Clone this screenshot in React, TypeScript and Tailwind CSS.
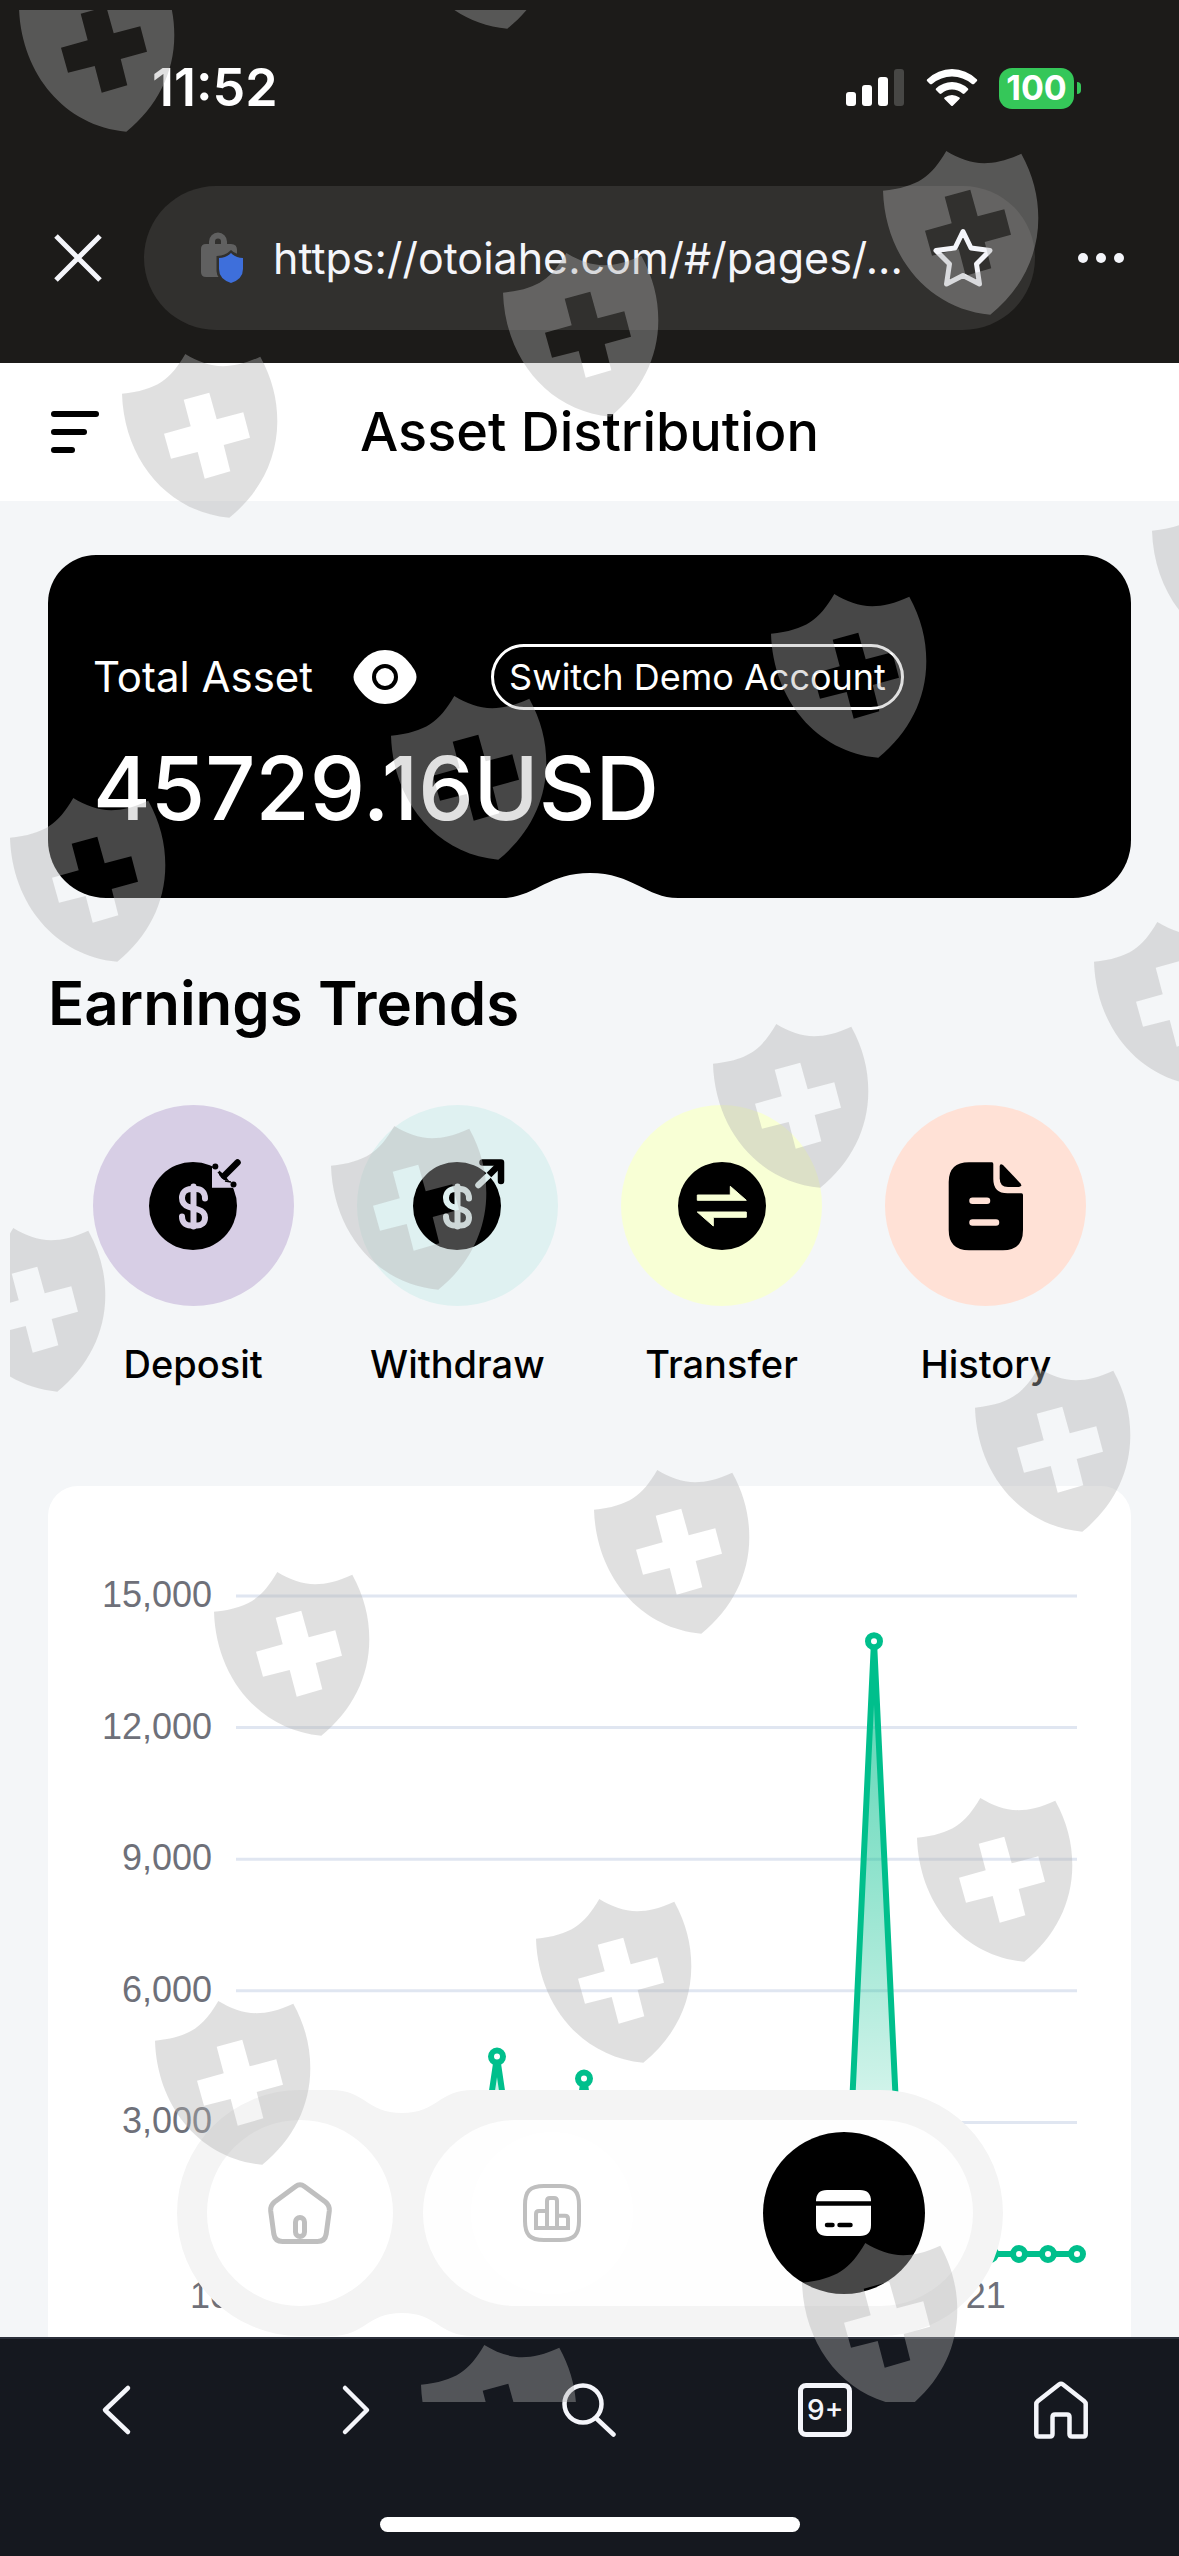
import { useState } from 'react';

interface Action {
    label: string;
    color: string;
    icon: React.ReactNode;
}

const shields = [
    [9, -42], [390, -145], [873, 141], [493, 243], [112, 344],
    [1142, 481], [761, 584], [381, 686], [0, 788],
    [1084, 912], [703, 1014], [321, 1116], [-60, 1218],
    [965, 1358], [584, 1460], [204, 1562],
    [907, 1788], [526, 1889], [145, 1991],
    [792, 2233], [411, 2335],
];

// 30 days of earnings, only three of them are not zero
const earnings = Array.from({ length: 30 }, (_, day) => {
    if (day === 9) return 4500;
    if (day === 12) return 4000;
    if (day === 22) return 13970;
    return 0;
});

const CHART = { left: 188, right: 1029, top: 110, bottom: 768, max: 15000 };

const pointX = (day: number) => CHART.left + ((CHART.right - CHART.left) / (earnings.length - 1)) * day;
const pointY = (value: number) => CHART.bottom - ((CHART.bottom - CHART.top) * value) / CHART.max;

const Dollar = ({ color }: { color: string }) => (
    <g fill="none" stroke={color} strokeWidth="6" strokeLinecap="round">
        <path d="M60 40.5C60 34 56 31 51.5 31H46C40.5 31 37 35 37 40C37 45 39.5 47.5 44 49L53 51.5C57.5 53 60 55 60 59.5C60 65 56.5 67.5 52 67.5H45.5C40 67.5 37 64 37 58.5" />
        <path d="M48.5 28.5V68.5" />
    </g>
);

const actions: Action[] = [
    {
        label: 'Deposit',
        color: 'bg-[#d7cee5]',
        icon: (
            <>
                <circle cx="48" cy="48" r="44" />
                <Dollar color="#d7cee5" />
                <path d="M67 29.7V9.7H74V17L79 22L88 24V29.7Z" fill="#d7cee5" />
                <path d="M92.5 4.5L79 18" stroke="#000" strokeWidth="6.5" strokeLinecap="round" />
                <circle cx="70.3" cy="8.5" r="3" />
                <circle cx="88.5" cy="26.5" r="3" />
                <path d="M73 14L78 19M80 23L86 24" stroke="#000" strokeWidth="1.5" />
            </>
        ),
    },
    {
        label: 'Withdraw',
        color: 'bg-[#dff1f1]',
        icon: (
            <>
                <circle cx="48" cy="48" r="44" />
                <Dollar color="#dff1f1" />
                <path d="M79 18L69.5 27" stroke="#dff1f1" strokeWidth="6.5" strokeLinecap="round" />
                <path d="M73.5 4.5H92V23" fill="none" stroke="#000" strokeWidth="6.5" strokeLinecap="round" strokeLinejoin="round" />
                <path d="M91 6L80 17" stroke="#000" strokeWidth="6.5" />
            </>
        ),
    },
    {
        label: 'Transfer',
        color: 'bg-[#f8ffd5]',
        icon: (
            <>
                <circle cx="48" cy="48" r="44" />
                <path
                    d="M23.3 37H56.3V28.3L72.3 42.3H23.3ZM23.3 54H72.3V59.3H39.3V68Z"
                    fill="#f8ffd5"
                    stroke="#f8ffd5"
                    strokeLinejoin="round"
                />
            </>
        ),
    },
    {
        label: 'History',
        color: 'bg-[#ffe1d6]',
        icon: (
            <>
                <path d="M31 4.3H54Q55.3 4.3 55.3 6V21Q55.3 35.3 69.5 35.3H83.5Q85 35.3 85 37V72Q85 92.3 65 92.3H31Q10.7 92.3 10.7 72V24Q10.7 4.3 31 4.3Z" />
                <path d="M61.7 8Q62 5 65 7L82.5 25.5Q84.5 28.5 81 29H70Q61.7 29 61.7 20.5Z" />
                <path d="M34.5 42.7H49M34.5 64.5H58" stroke="#ffe1d6" strokeWidth="6.5" strokeLinecap="round" />
            </>
        ),
    },
];

const StatusBar = () => (
    <div className="flex h-[172px] items-center justify-between pl-[152px] pr-[98px] pt-1 text-white">
        <span className="text-[52px] font-semibold leading-none">11:52</span>
        <div className="flex items-center">
            <svg width="58" height="38" viewBox="0 0 58 38" fill="#fff" className="mr-[22px]">
                <rect x="0" y="23" width="10" height="14" rx="3" />
                <rect x="16" y="16" width="10" height="21" rx="3" />
                <rect x="32" y="8" width="10" height="29" rx="3" />
                <rect x="48" y="0" width="10" height="37" rx="3" fill="#474745" />
            </svg>
            <svg width="52" height="38" viewBox="0 0 52 38" fill="#fff" className="mr-[21px]">
                <path d="M1 10.5Q12 0 26 0T51 10.5Q51.5 11.3 51 12L48 15Q47 15.7 46 15Q37 7.5 26 7.5T6 15Q5 15.7 4 15L1 12Q.5 11.3 1 10.5Z" />
                <path d="M10 19.5Q17 13 26 13T42 19.5Q42.7 20.3 42 21L38.5 24.5Q37.5 25.3 36.5 24.5Q32 20.5 26 20.5T15.5 24.5Q14.5 25.3 13.5 24.5L10 21Q9.3 20.3 10 19.5Z" />
                <path d="M18.5 28.5Q22 26 26 26T33.5 28.5Q34.3 29.3 33.5 30L27 36.5Q26 37.5 25 36.5L18.5 30Q17.7 29.3 18.5 28.5Z" />
            </svg>
            <span className="flex h-[41px] w-[75px] items-center justify-center rounded-[13px] bg-[#35c759] text-[34px] font-bold leading-none">
                100
            </span>
            <span className="ml-[3px] h-3 w-1 rounded-r-full bg-[#35c759]" />
        </div>
    </div>
);

const AddressBar = () => (
    <div className="flex items-center gap-[42px] px-[54px] pb-[33px] pt-[14px] text-[#f4f5fa]">
        <button type="button" aria-label="Close">
            <svg width="48" height="48" viewBox="0 0 48 48" stroke="currentColor" strokeWidth="5">
                <path d="M2 2L46 46M46 2L2 46" />
            </svg>
        </button>
        <div className="flex h-36 min-w-0 flex-1 items-center rounded-full bg-[#31302e] pl-[56px] pr-[42px]">
            <svg width="44" height="54" viewBox="0 0 44 54" className="mr-[29px] shrink-0">
                <path d="M12 14V10.5a6 6 0 0 1 12 0V14" fill="none" stroke="#606060" strokeWidth="6" />
                <path d="M6 13H31Q37 13 37 19V46H6Q1 46 1 41V18Q1 13 6 13Z" fill="#606060" />
                <path d="M31 19Q25 25 16.5 25V40Q16.5 49 31 55H46V24Q36 24 31 19Z" fill="#31302e" />
                <path d="M31 22Q36 27 43 27V38Q43 48 31 52Q19 48 19 38V27Q26 27 31 22Z" fill="#3e6fdb" />
            </svg>
            <input
                type="text"
                aria-label="Address"
                readOnly
                value="https://otoiahe.com/#/pages/..."
                className="min-w-0 flex-1 bg-transparent text-[43px] outline-none"
            />
            <button type="button" aria-label="Add bookmark">
                <svg width="60" height="60" viewBox="0 0 60 60" fill="none" stroke="currentColor" strokeWidth="5" strokeLinejoin="round">
                    <path d="M30 3.5L38 20L57 22.5L43.5 36L46.5 56L30 47.5L13.5 56L16.5 36L3 22.5L22 20Z" />
                </svg>
            </button>
        </div>
        <button type="button" aria-label="More">
            <svg width="48" height="12" viewBox="0 0 48 12" fill="currentColor">
                <circle cx="6" cy="6" r="5" />
                <circle cx="24" cy="6" r="5" />
                <circle cx="42" cy="6" r="5" />
            </svg>
        </button>
    </div>
);

const BalanceCard = () => {
    const [visible, setVisible] = useState<boolean>(true);

    return (
        <section className="relative h-[343px] rounded-t-[48px] rounded-b-[58px] bg-black px-[45px] pt-[89px] text-white">
            <div className="flex items-center">
                <span className="text-[42px] leading-none">Total Asset</span>
                <button type="button" aria-label="Show balance" className="ml-10" onClick={() => setVisible(!visible)}>
                    <svg width="64" height="54" viewBox="0 0 64 54">
                        <path d="M32 0C47 0 56 11 62 21Q65 27 62 33C56 43 47 54 32 54S8 43 2 33Q-1 27 2 21C8 11 17 0 32 0Z" fill="#fff" />
                        <circle cx="32" cy="27" r="11" fill="none" stroke="#000" strokeWidth="4" />
                    </svg>
                </button>
                <button type="button" className="ml-[74px] h-[66px] rounded-full border-[3px] border-white px-[15px] text-[36px] leading-none">
                    Switch Demo Account
                </button>
            </div>
            <p className="mt-[34px] text-[88px] font-medium leading-none">{visible ? '45729.16USD' : '******'}</p>
            <svg width="176" height="26" viewBox="0 0 176 26" className="absolute bottom-0 left-1/2 -translate-x-1/2" fill="#f4f6f8">
                <path d="M0 26C32 26 45 1 88 1S144 26 176 26Z" />
            </svg>
        </section>
    );
};

const EarningsChart = () => {
    const line = earnings.map((value, day) => `${pointX(day)},${pointY(value)}`).join(' ');

    return (
        <svg viewBox="0 0 1083 851" className="block w-full" role="img" aria-label="Earnings over the last 30 days">
            <defs>
                <linearGradient id="earnings-fill" x1="0" y1="0" x2="0" y2="1">
                    <stop offset="0" stopColor="#00bf8c" stopOpacity="0.7" />
                    <stop offset="1" stopColor="#00bf8c" stopOpacity="0" />
                </linearGradient>
            </defs>
            {[15000, 12000, 9000, 6000, 3000].map((value) => (
                <g key={value}>
                    <line x1={CHART.left} x2={CHART.right} y1={pointY(value)} y2={pointY(value)} stroke="#e0e6f1" strokeWidth="3" />
                    <text x="164" y={pointY(value) + 11} textAnchor="end" className="fill-[#6e7079] font-['Liberation_Sans',sans-serif] text-[36px]">
                        {value.toLocaleString('en-US')}
                    </text>
                </g>
            ))}
            <polygon points={`${CHART.left},${CHART.bottom} ${line} ${CHART.right},${CHART.bottom}`} fill="url(#earnings-fill)" />
            <polyline points={line} fill="none" stroke="#00bf8c" strokeWidth="6" strokeLinejoin="bevel" />
            {earnings.map((value, day) => (
                <circle key={day} cx={pointX(day)} cy={pointY(value)} r="6" fill="#fff" stroke="#00bf8c" strokeWidth="6" />
            ))}
            <text x={pointX(0)} y="822" textAnchor="middle" className="fill-[#6e7079] font-['Liberation_Sans',sans-serif] text-[36px]">
                10-27
            </text>
            <text x={pointX(25)} y="822" textAnchor="middle" className="fill-[#6e7079] font-['Liberation_Sans',sans-serif] text-[36px]">
                11-21
            </text>
        </svg>
    );
};

const TabBar = () => (
    <nav className="absolute bottom-px left-1/2 flex h-[246px] w-[826px] -translate-x-1/2 items-center gap-[30px] p-[30px]">
        <svg viewBox="0 0 826 246" className="absolute inset-0 h-full w-full" fill="#f4f4f4">
            <path d="M123 0H154C188 0 190 23 225 23S262 0 296 0H703A123 123 0 0 1 703 246H296C262 246 260 223 225 223S188 246 154 246H123A123 123 0 0 1 123 0Z" />
        </svg>
        <button type="button" aria-label="Home" className="relative flex size-[186px] items-center justify-center rounded-full bg-white">
            <svg width="80" height="80" viewBox="0 0 80 80" fill="none" stroke="#bfbfbf" strokeWidth="5">
                <path d="M44.5 13.5L65.5 29Q69.8 32.5 69.3 38L66.2 61Q65 68.5 57.5 68.5H22.5Q15 68.5 13.8 61L10.7 38Q10.2 32.5 14.5 29L35.5 13.5Q40 10 44.5 13.5Z" />
                <rect x="35.5" y="44.5" width="9" height="19" rx="4.5" />
            </svg>
        </button>
        <div className="relative flex h-[186px] flex-1 items-center justify-between rounded-full bg-[#fefefe] px-12">
            <button type="button" aria-label="Market" className="flex size-[162px] items-center justify-center rounded-full bg-white">
                <svg width="60" height="60" viewBox="0 0 60 60" fill="none" stroke="#bfbfbf" strokeWidth="4">
                    <path d="M22 3H38C52 3 57 8 57 22V38C57 52 52 57 38 57H22C8 57 3 52 3 38V22C3 8 8 3 22 3Z" />
                    <path d="M25 45V18Q25 15 28 15H32Q35 15 35 18V45ZM25 28H17Q14 28 14 31V45H25M35 32.7H43Q46 32.7 46 35.7V45H35" />
                </svg>
            </button>
            <button type="button" aria-label="Assets" className="flex size-[162px] items-center justify-center rounded-full bg-black">
                <svg width="55" height="46" viewBox="0 0 55 46" fill="#fff">
                    <path d="M0 11.3Q0 0 11 0H44Q55 0 55 11.3ZM0 15.7H55V35Q55 46 44 46H11Q0 46 0 35Z" />
                    <path d="M11 35H16.5M23.5 35H34.5" stroke="#000" strokeWidth="4.5" strokeLinecap="round" />
                </svg>
            </button>
        </div>
    </nav>
);

const BrowserBar = () => (
    <footer className="flex h-[219px] flex-col items-center justify-between border-t-2 border-[#2b303b] bg-[#15181f] pb-6 text-[#f4f5fa]">
        <div className="grid h-[141px] w-full grid-cols-5 place-items-center">
            <button type="button" aria-label="Back">
                <svg width="54" height="54" viewBox="0 0 54 54" fill="none" stroke="currentColor" strokeWidth="4.5" strokeLinecap="round" strokeLinejoin="round">
                    <path d="M37 5L14 27L37 49" />
                </svg>
            </button>
            <button type="button" aria-label="Forward">
                <svg width="54" height="54" viewBox="0 0 54 54" fill="none" stroke="currentColor" strokeWidth="4.5" strokeLinecap="round" strokeLinejoin="round">
                    <path d="M18 5L40 27L18 49" />
                </svg>
            </button>
            <button type="button" aria-label="Search">
                <svg width="54" height="54" viewBox="0 0 54 54" fill="none" stroke="currentColor" strokeWidth="4.5" strokeLinecap="round">
                    <circle cx="21" cy="21" r="18.5" />
                    <path d="M35 36L51.5 51.5" />
                </svg>
            </button>
            <button type="button" className="flex size-[54px] items-center justify-center rounded-lg border-[5px] border-current text-[28px] font-medium leading-none">
                9+
            </button>
            <button type="button" aria-label="Home page">
                <svg width="54" height="60" viewBox="0 0 54 60" fill="none" stroke="currentColor" strokeWidth="4.5" strokeLinejoin="round">
                    <path d="M25 4.5Q27 3 29 4.5L50 21Q51.7 22.5 51.7 24V54Q51.7 56.5 49.5 56.5H38Q35.5 56.5 35.5 54V37Q35.5 34.5 33 34.5H21Q18.5 34.5 18.5 37V54Q18.5 56.5 16 56.5H4.5Q2.3 56.5 2.3 54V24Q2.3 22.5 4 21Z" />
                </svg>
            </button>
        </div>
        <span className="h-[15px] w-[420px] rounded-full bg-white" />
    </footer>
);

const ShieldPattern = () => (
    <svg className="pointer-events-none absolute left-2.5 top-2.5 h-[2392px] w-full" aria-hidden="true">
        <defs>
            <path
                id="shield"
                fillRule="evenodd"
                d="M0 39.7C35 36 48 26 63.3 0C85 13 105 18 138.3 2.7C150 24 155.3 45 155.3 67.3C155.3 105 138 139 107.3 163.7C45 158 2 105 0 39.7ZM61.7 45.7L87.3 38.7L94.7 65.3L121.3 58.3L128 83.7L101.7 91L108.3 117.3L82.7 124.7L75.7 98L49 104.7L42 79.7L68.7 72.3Z"
            />
        </defs>
        {shields.map(([x, y]) => (
            <use key={`${x}-${y}`} href="#shield" x={x} y={y} fill="#b2b2b2" fillOpacity="0.4" />
        ))}
    </svg>
);

const App = () => {
    return (
        <div className="relative flex min-h-screen flex-col overflow-hidden bg-[#f4f6f8] font-['Inter',sans-serif] text-black">
            <div className="bg-[#1c1b19]">
                <StatusBar />
                <AddressBar />
            </div>
            <header className="grid h-[138px] grid-cols-[48px_1fr_48px] items-center bg-white px-[51px]">
                <button type="button" aria-label="Menu" className="flex flex-col gap-3">
                    <span className="h-1.5 w-12 rounded-full bg-black" />
                    <span className="h-1.5 w-9 rounded-full bg-black" />
                    <span className="h-1.5 w-6 rounded-full bg-black" />
                </button>
                <h1 className="text-center text-[54px] font-medium leading-none">Asset Distribution</h1>
            </header>
            <main className="relative flex-1 px-12 pt-[54px]">
                <BalanceCard />
                <h2 className="mt-[75px] text-[60px] font-semibold leading-[60px]">Earnings Trends</h2>
                <div className="mt-[72px] grid grid-cols-4 px-[13px]">
                    {actions.map((action) => (
                        <button key={action.label} type="button" className="flex flex-col items-center gap-[34px]">
                            <span className={`flex size-[201px] items-center justify-center rounded-full ${action.color}`}>
                                <svg width="96" height="96" viewBox="0 0 96 96">
                                    {action.icon}
                                </svg>
                            </span>
                            <span className="text-[38px] font-medium leading-[48px]">{action.label}</span>
                        </button>
                    ))}
                </div>
                <section className="mt-[98px] rounded-t-[30px] bg-white">
                    <EarningsChart />
                </section>
                <TabBar />
            </main>
            <BrowserBar />
            <ShieldPattern />
        </div>
    );
};

export default App;
